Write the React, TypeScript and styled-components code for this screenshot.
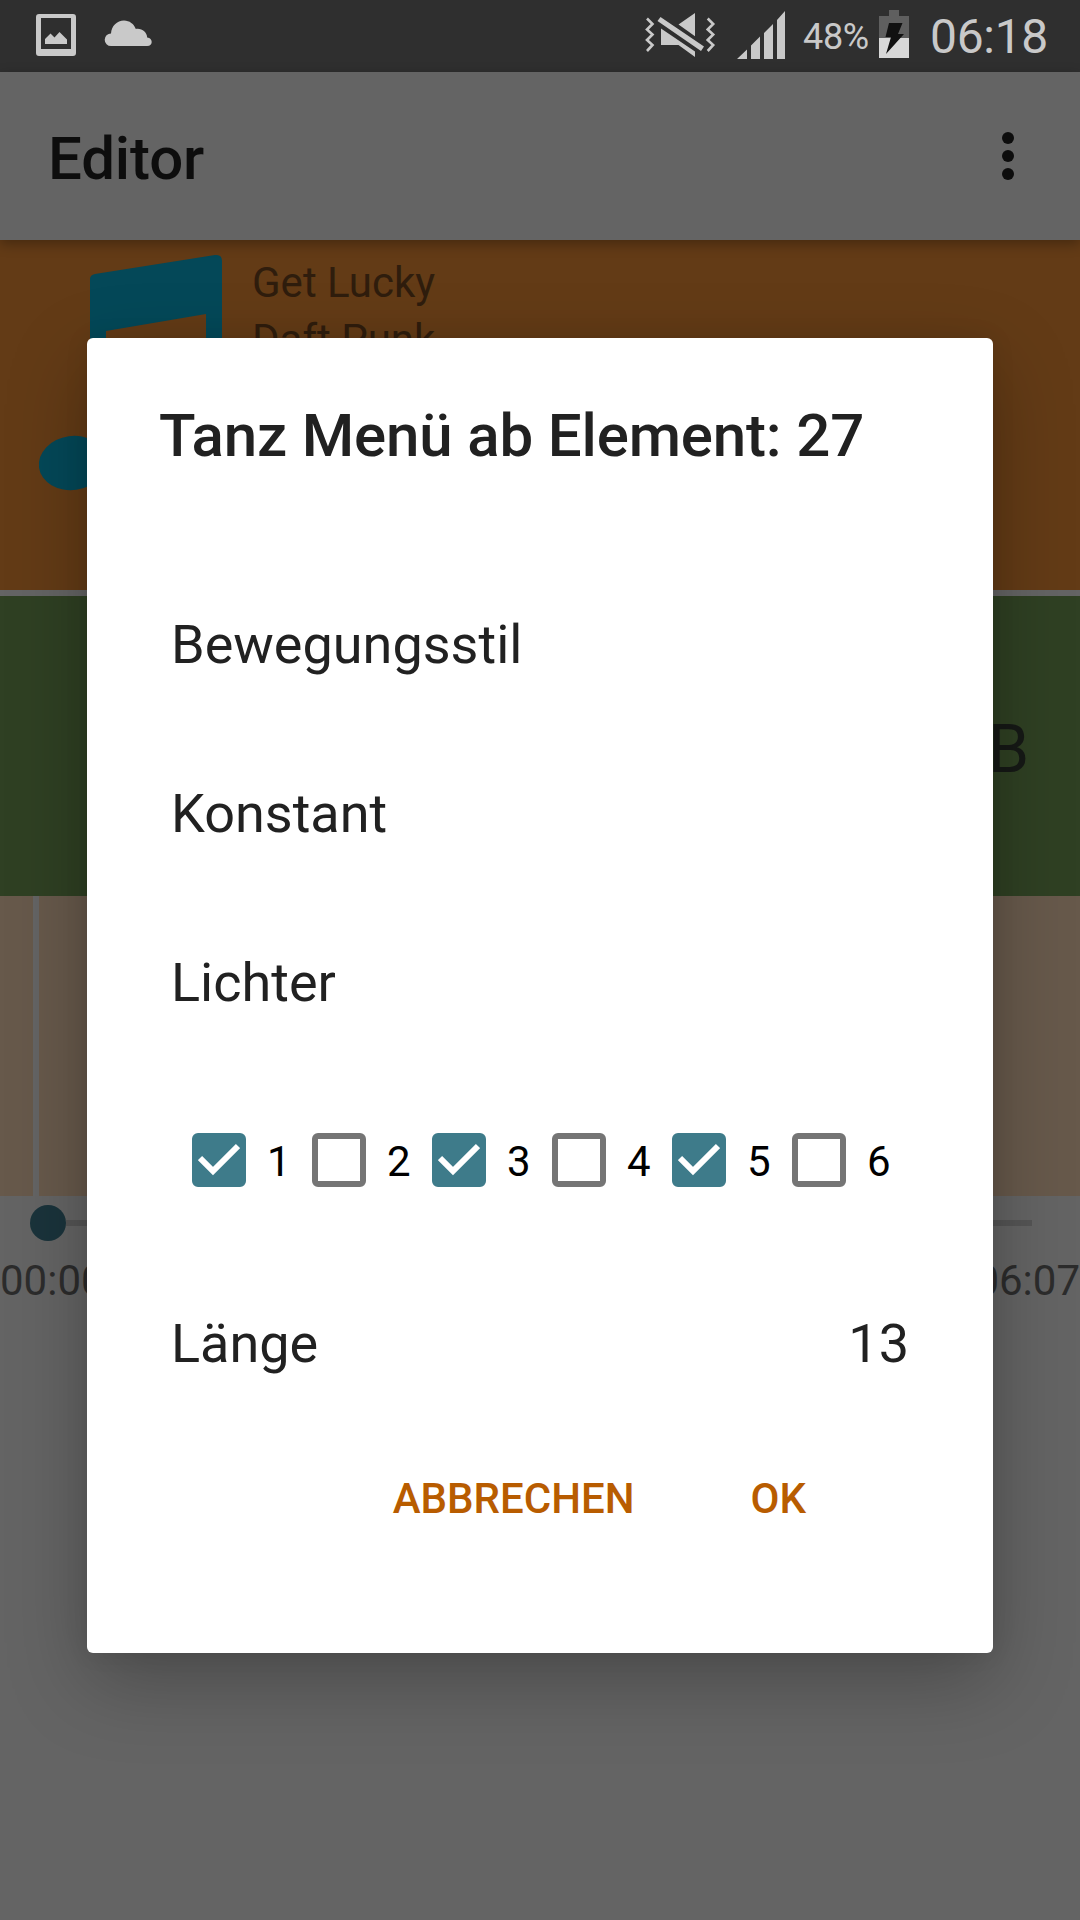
import React from "react";
import styled, { createGlobalStyle } from "styled-components";

const GlobalStyle = createGlobalStyle`
  * { box-sizing: border-box; }
  body { margin: 0; background: #646464; font-family: Roboto, "Noto Sans", sans-serif; }
`;

const Screen = styled.div`
  position: relative;
  width: 1080px;
  height: 1920px;
  overflow: hidden;
  display: flex;
  flex-direction: column;
  background: #646464;
`;

const StatusBar = styled.header`
  height: 72px;
  flex: none;
  display: flex;
  justify-content: space-between;
  background: #2f2f2f;
  color: #c9c9c9;
`;

const StatusGroup = styled.div<{ $left?: number; $right?: number; $gap?: number }>`
  display: flex;
  align-items: flex-start;
  gap: ${(p) => p.$gap ?? 0}px;
  padding-left: ${(p) => p.$left ?? 0}px;
  padding-right: ${(p) => p.$right ?? 0}px;
`;

const StatusIcon = styled.svg<{ $ml?: number }>`
  display: block;
  flex: none;
  height: 72px;
  margin-left: ${(p) => p.$ml ?? 0}px;
`;

const StatusText = styled.span<{ $size: number; $line: number; $ml: number; $width: number }>`
  font-size: ${(p) => p.$size}px;
  line-height: ${(p) => p.$line}px;
  margin-left: ${(p) => p.$ml}px;
  width: ${(p) => p.$width}px;
  letter-spacing: -0.3px;
  white-space: nowrap;
`;

const AppBar = styled.div`
  position: relative;
  z-index: 1;
  height: 168px;
  flex: none;
  display: flex;
  align-items: center;
  justify-content: space-between;
  padding: 5px 66px 0 48px;
  background: #646464;
  color: #0d0d0d;
  box-shadow: 0 4px 12px rgba(0, 0, 0, 0.3);
`;

const AppTitle = styled.h1`
  margin: 0;
  font-size: 60px;
  line-height: 70px;
  font-weight: 500;
  letter-spacing: -0.15px;
`;

const MenuButton = styled.button`
  display: flex;
  flex-direction: column;
  gap: 6px;
  padding: 0 0 5px;
  border: 0;
  background: none;
`;

const Dot = styled.i`
  width: 12px;
  height: 12px;
  border-radius: 50%;
  background: #0d0d0d;
`;

const SongPanel = styled.section`
  height: 350px;
  flex: none;
  display: flex;
  background: #633b16;
`;

const NoteArt = styled.svg`
  display: block;
  width: 252px;
  height: 350px;
  flex: none;
`;

const SongInfo = styled.div`
  display: flex;
  flex-direction: column;
  padding-top: 14px;
  font-size: 42px;
  line-height: 57px;
  color: #2f1d0d;
`;

const DancePanel = styled.section`
  height: 300px;
  flex: none;
  margin-top: 6px;
  display: flex;
  align-items: center;
  justify-content: flex-end;
  padding: 7px 51px 0 0;
  background: #2f4023;
  color: #161916;
  font-size: 66px;
`;

const LightPanel = styled.section`
  height: 300px;
  flex: none;
  display: flex;
  background: #67594b;
`;

const LightDivider = styled.div`
  width: 6px;
  margin-left: 33px;
  background: #646464;
`;

const Seek = styled.div`
  display: flex;
  align-items: center;
  height: 54px;
  flex: none;
  padding: 0 48px 0 30px;
`;

const Thumb = styled.div`
  width: 36px;
  height: 36px;
  border-radius: 50%;
  background: #1a333b;
`;

const Track = styled.div`
  flex: 1;
  height: 6px;
  background: #555;
`;

const Times = styled.div`
  display: flex;
  justify-content: space-between;
  padding-top: 6px;
  font-size: 42px;
  line-height: 50px;
  color: #2c2c2c;
`;

const Dialog = styled.div`
  position: absolute;
  z-index: 2;
  left: 87px;
  top: 338px;
  width: 906px;
  height: 1315px;
  display: flex;
  flex-direction: column;
  background: #fff;
  border-radius: 6px;
  color: #212121;
  box-shadow: 0 28px 80px rgba(0, 0, 0, 0.26), 0 0 24px rgba(0, 0, 0, 0.08);
`;

const DialogTitle = styled.h2`
  margin: 0 0 92px;
  padding: 65px 72px 0;
  font-size: 60px;
  line-height: 65px;
  font-weight: 500;
  letter-spacing: -0.15px;
`;

const Row = styled.div<{ $height?: number }>`
  height: ${(p) => p.$height ?? 169}px;
  display: flex;
  align-items: center;
  justify-content: space-between;
  padding: 0 84px;
  font-size: 54px;
`;

const CheckRow = styled.div`
  height: 186px;
  display: flex;
  align-items: center;
  padding-left: 105px;
`;

const CheckItem = styled.label`
  width: 120px;
  display: flex;
  align-items: center;
  gap: 21px;
  color: #000;
  font-size: 42px;
  line-height: 50px;
`;

const CheckBox = styled.span<{ $on: boolean }>`
  width: 54px;
  height: 54px;
  flex: none;
  border-radius: 6px;
  border: 6px solid ${(p) => (p.$on ? "#3e7b8a" : "#757575")};
  background: ${(p) => (p.$on ? "#3e7b8a" : "#fff")};
`;

const CheckMark = styled.svg`
  display: block;
  width: 42px;
  height: 42px;
`;

const CheckLabel = styled.span`
  padding-top: 3px;
`;

const Actions = styled.div`
  height: 129px;
  display: flex;
  align-items: center;
  justify-content: flex-end;
  gap: 116px;
  padding-right: 187px;
`;

const ActionButton = styled.button`
  padding: 0;
  border: 0;
  background: none;
  font-family: inherit;
  font-size: 42px;
  line-height: 50px;
  font-weight: 500;
  color: #b85c00;
`;

const lights = [true, false, true, false, true, false];

export default function App() {
  return (
    <Screen>
      <GlobalStyle />
      <StatusBar>
        <StatusGroup $left={36} $gap={28}>
          <StatusIcon width="40" viewBox="36 0 40 72" fill="#c9c9c9">
            <path fillRule="evenodd" d="M39 14h34a3 3 0 0 1 3 3v36a3 3 0 0 1-3 3H39a3 3 0 0 1-3-3V17a3 3 0 0 1 3-3zM41 18v31h30V18z" />
            <path d="M45 44v-5l5.500-5.500 4 4 5-5.500 7.500 7.500v4.500z" />
          </StatusIcon>
          <StatusIcon width="48" viewBox="104 0 48 72" fill="#c9c9c9">
            <path d="M111 46a6.300 6.300 0 0 1 0-12.600C111.500 26 117 20.500 124 20.500c5.500 0 10 3.500 11.800 8.500 6-1 11 3 11.400 8.500 6 .5 6 8.500 0 8.500z" />
          </StatusIcon>
        </StatusGroup>
        <StatusGroup $right={0}>
          <StatusIcon width="72" viewBox="645 0 72 72" fill="#c9c9c9">
            <path fill="none" stroke="#c9c9c9" strokeWidth="2.600" d="M647 18.500l5.500 5.500-5.500 5.500 5.500 5-5.500 5.500 5.500 5-5.500 6M707.700 18.500l5.500 5.500-5.500 5.500 5.500 5-5.500 5.500 5.500 5-5.500 6" />
            <path d="M660.500 17L704 46.500l-3 4.500-43.500-30zM695 13v23.300L678.500 24.500zM661 28.500L695 51.500V57l-16.500-12H661z" />
          </StatusIcon>
          <StatusIcon $ml={20} width="48" viewBox="737 0 48 72" fill="#c9c9c9">
            <path d="M737 59l10-9.500V59zM751 59V45.500l9-9V59zM764 59V33l9-9v35zM777 59V20l8-9v48z" />
          </StatusIcon>
          <StatusText $size={36} $line={75} $ml={18} $width={66}>48%</StatusText>
          <StatusIcon $ml={10} width="30" viewBox="879 0 30 72">
            <path fill="#5f5f5f" d="M889 10h10v6h10v22h-30V16h10z" />
            <path fill="#d8d8d8" d="M879 38h30v20h-30z" />
            <path fill="#111" d="M889 23h13.500l-4.500 11h6l-18 20 5-17h-5.500z" />
          </StatusIcon>
          <StatusText $size={48} $line={73} $ml={21} $width={150}>06:18</StatusText>
        </StatusGroup>
      </StatusBar>
      <AppBar>
        <AppTitle>Editor</AppTitle>
        <MenuButton aria-label="Menü">
          <Dot />
          <Dot />
          <Dot />
        </MenuButton>
      </AppBar>
      <SongPanel>
        <NoteArt viewBox="0 240 252 350" fill="#044858">
          <path fillRule="evenodd" d="M90 463V279q0-4 5-5L215 255q7-1 7 6V440h-16V314L106 331V463z" />
          <ellipse cx="72.500" cy="463" rx="33.800" ry="27" transform="rotate(-8 72.500 463)" />
          <ellipse cx="188.500" cy="440" rx="33.800" ry="27" />
        </NoteArt>
        <SongInfo>
          <span>Get Lucky</span>
          <span>Daft Punk</span>
        </SongInfo>
      </SongPanel>
      <DancePanel>B</DancePanel>
      <LightPanel>
        <LightDivider />
      </LightPanel>
      <Seek>
        <Thumb />
        <Track />
      </Seek>
      <Times>
        <span>00:00</span>
        <span>06:07</span>
      </Times>
      <Dialog role="dialog">
        <DialogTitle>Tanz Menü ab Element: 27</DialogTitle>
        <Row>Bewegungsstil</Row>
        <Row>Konstant</Row>
        <Row>Lichter</Row>
        <CheckRow>
          {lights.map((on, i) => (
            <CheckItem key={i}>
              <CheckBox $on={on}>
                {on && (
                  <CheckMark viewBox="6 6 42 42">
                    <path fill="none" stroke="#fff" strokeWidth="6" d="M8 25L21 38L46 13" />
                  </CheckMark>
                )}
              </CheckBox>
              <CheckLabel>{i + 1}</CheckLabel>
            </CheckItem>
          ))}
        </CheckRow>
        <Row $height={181}>
          <span>Länge</span>
          <span>13</span>
        </Row>
        <Actions>
          <ActionButton>ABBRECHEN</ActionButton>
          <ActionButton>OK</ActionButton>
        </Actions>
      </Dialog>
    </Screen>
  );
}
